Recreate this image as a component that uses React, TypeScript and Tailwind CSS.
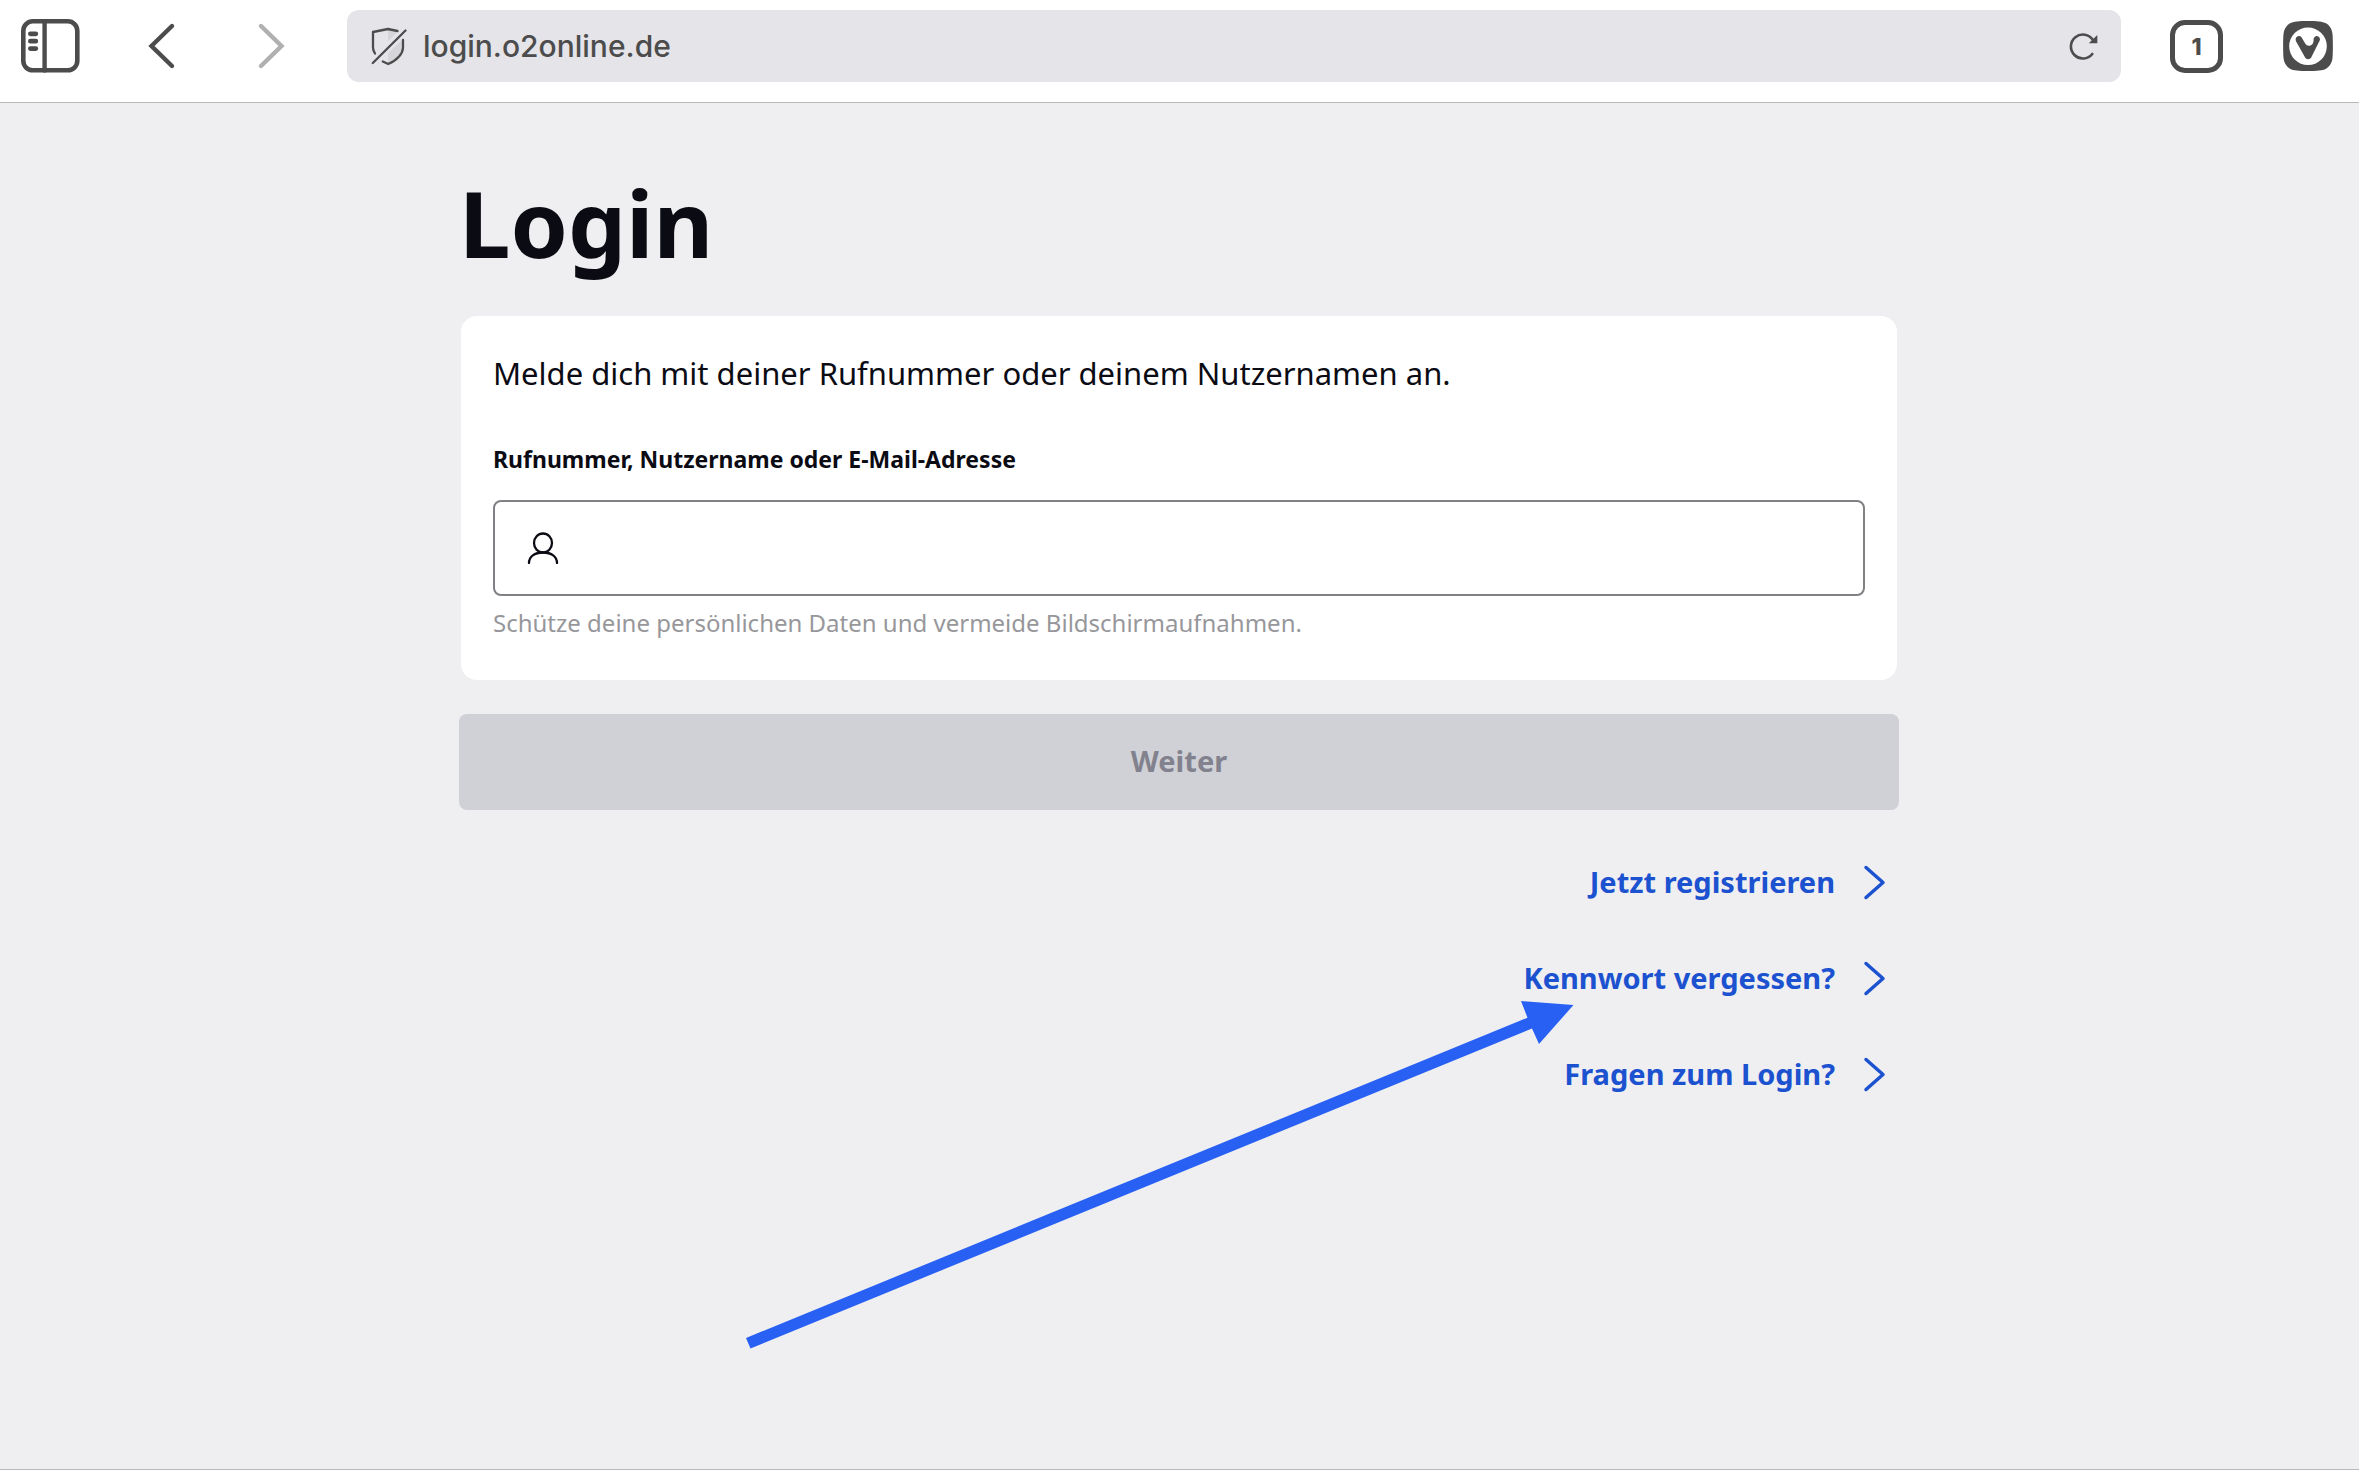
import type { ReactNode } from 'react';

const links = [
  { label: 'Jetzt registrieren', href: '#registrieren' },
  { label: 'Kennwort vergessen?', href: '#kennwort' },
  { label: 'Fragen zum Login?', href: '#hilfe' },
];

function IconButton({ label, className, children }: { label: string; className?: string; children: ReactNode }) {
  return (
    <button type="button" aria-label={label} className={`shrink-0 flex items-center justify-center ${className ?? ''}`}>
      {children}
    </button>
  );
}

function SidebarIcon() {
  return (
    <svg width="60" height="56" viewBox="0 0 60 56" fill="none" stroke="currentColor" strokeLinecap="round">
      <rect x="3.3" y="3.3" width="54" height="49" rx="9.5" strokeWidth="4.6" />
      <path d="M24.6 3.5v49" strokeWidth="4.4" />
      <path d="M10.4 15.8h5.4M10.4 23.2h5.4M10.4 30.6h5.4" strokeWidth="4.8" />
    </svg>
  );
}

function ShieldOffIcon() {
  return (
    <svg width="36" height="40" viewBox="0 0 36 40" fill="none" stroke="currentColor" strokeWidth="2.3" strokeLinecap="round" strokeLinejoin="round">
      <path d="M17 3.5L27 5.2 17 15.5zM31 14v8c0 6.5-5.5 12-14 15V27z" fill="#d6d6da" stroke="none" />
      <path d="M26.5 5L17 3 2 6v15.5c0 2 .8 4 2 6" />
      <path d="M32 14v7.5c0 6-5.5 12.5-14.8 16.5L11.8 35.5" />
      <path d="M1.8 37L34.5 4.5" />
    </svg>
  );
}

function ReloadIcon() {
  return (
    <svg width="30" height="30" viewBox="0 0 30 30" fill="none" stroke="currentColor" strokeWidth="2.6" strokeLinecap="round">
      <path d="M23.3 23A12 12 0 1 1 24 9" />
      <path d="M28.3 4v8.3h-8.5z" fill="currentColor" stroke="none" />
    </svg>
  );
}

function VivaldiIcon() {
  return (
    <svg width="50" height="50" viewBox="0 0 50 50">
      <path
        d="M25 0C34 0 39.5.4 43 2.3 46 4 49 7.5 49.5 13c.5 5 .5 19 0 24-.5 5.5-3.5 9-6.500 10.700C39.500 49.600 34 50 25 50s-14.500-.4-18-2.300C4 46 1 42.500.5 37 0 32 0 18 .5 13 1 7.500 4 4 7 2.300 10.500.4 16 0 25 0z"
        fill="currentColor"
      />
      <circle cx="25" cy="25.3" r="18.8" fill="#fff" />
      <path
        d="M12.6 18.5a3.300 3.300 0 0 1 5.900-2.200l3.700 6.300c1.900 3 5.600 2.600 7.300.3 1.100-1.600 1.100-2.800 1.100-4.300a3.200 3.200 0 1 1 6 1.200L28.200 36.600c-1.300 2.200-4.800 2.200-6.100 0L13 20.300z"
        fill="currentColor"
      />
    </svg>
  );
}

function BrowserBar() {
  return (
    <header className="flex items-start border-b border-[#b9b9bb] bg-white pt-[10px] pb-5 pl-5 pr-[26px] text-[#4c4c4c]">
      <IconButton label="Seitenleiste" className="h-[72px]">
        <SidebarIcon />
      </IconButton>
      <IconButton label="Zurück" className="ml-16 h-[72px] w-9">
        <svg width="36" height="48" viewBox="0 0 36 48" fill="none" stroke="currentColor" strokeWidth="4.4" strokeLinecap="round">
          <path d="M28 4L7.500 24 28 44" />
        </svg>
      </IconButton>
      <IconButton label="Vorwärts" className="ml-[72px] h-[72px] w-9 text-[#b0b0b0]">
        <svg width="36" height="48" viewBox="0 0 36 48" fill="none" stroke="currentColor" strokeWidth="4.4" strokeLinecap="round">
          <path d="M9 4l20.500 20L9 44" />
        </svg>
      </IconButton>
      <div className="ml-[59px] flex h-[72px] flex-1 items-center rounded-[12px] bg-[#e4e4e9] pl-6 pr-[22px]">
        <ShieldOffIcon />
        <input
          type="text"
          aria-label="Adresse"
          defaultValue="login.o2online.de"
          className="ml-4 min-w-0 flex-1 bg-transparent font-['Inter',sans-serif] text-[30px] font-medium outline-none"
        />
        <IconButton label="Neu laden">
          <ReloadIcon />
        </IconButton>
      </div>
      <div className="flex h-[72px] items-center">
        <button
          type="button"
          aria-label="Tabs"
          className="ml-[49px] flex size-[53px] items-center justify-center rounded-[15px] border-[5px] border-current pt-0.5 font-['Inter',sans-serif] text-[23px] font-extrabold"
        >
          1
        </button>
        <IconButton label="Vivaldi-Menü" className="ml-[60px]">
          <VivaldiIcon />
        </IconButton>
      </div>
    </header>
  );
}

function LoginCard() {
  return (
    <section className="mx-0.5 rounded-2xl bg-white px-8 pt-[33px] pb-[41px]">
      <p className="text-[31px] leading-[48px]">Melde dich mit deiner Rufnummer oder deinem Nutzernamen an.</p>
      <label htmlFor="username" className="mt-[46px] block text-[23px] leading-8 font-bold">
        Rufnummer, Nutzername oder E-Mail-Adresse
      </label>
      <div className="mt-[25px] flex h-24 items-center rounded-lg border-2 border-[#808085] px-8">
        <svg width="32" height="32" viewBox="0 0 32 32" fill="none" stroke="currentColor" strokeWidth="2.3" strokeLinecap="round">
          <ellipse cx="16" cy="11" rx="9" ry="9.5" />
          <path d="M2 31c0-6.500 5.500-10.500 14-10.500S30 24.500 30 31" />
        </svg>
        <input id="username" type="text" className="ml-6 h-full min-w-0 flex-1 bg-transparent text-[31px] outline-none" />
      </div>
      <p className="mt-[11px] text-[24px] leading-8 text-[#97979b]">
        Schütze deine persönlichen Daten und vermeide Bildschirmaufnahmen.
      </p>
    </section>
  );
}

export default function App() {
  return (
    <div className="flex min-h-screen flex-col border-b border-[#b9b9bb] bg-[#efeff2] font-['Noto_Sans','Open_Sans',sans-serif] text-[#0b0b14]">
      <BrowserBar />
      <main className="relative mx-auto w-full max-w-[1441px] pt-16 pr-px">
        <h1 className="mb-[37px] text-[92px] leading-[112px] font-bold">Login</h1>
        <LoginCard />
        <button
          type="button"
          disabled
          className="mt-[34px] h-24 w-full rounded-lg bg-[#d0d1d6] pb-0.5 text-[29px] font-bold text-[#82828f]"
        >
          Weiter
        </button>
        <nav className="mt-10 flex flex-col items-end gap-8 pr-3">
          {links.map((link) => (
            <a key={link.href} href={link.href} className="flex h-16 items-center gap-[26px] text-[29px] font-bold text-[#1c52cf]">
              {link.label}
              <svg width="26" height="36" viewBox="0 0 26 36" fill="none" stroke="currentColor" strokeWidth="3.5" strokeLinecap="round" strokeLinejoin="round">
                <path d="M5 3.5l17 15-17 15" />
              </svg>
            </a>
          ))}
        </nav>
        {/* arrow pointing at the password link */}
        <svg
          className="pointer-events-none absolute top-[898px] right-[326px]"
          width="828"
          height="348"
          viewBox="0 0 828 348"
          fill="#2860f4"
        >
          <path d="M0 337L781.5 16.7 775 0l52.5 4L793 43l-7-15.5L4.5 347.5z" />
        </svg>
      </main>
    </div>
  );
}
